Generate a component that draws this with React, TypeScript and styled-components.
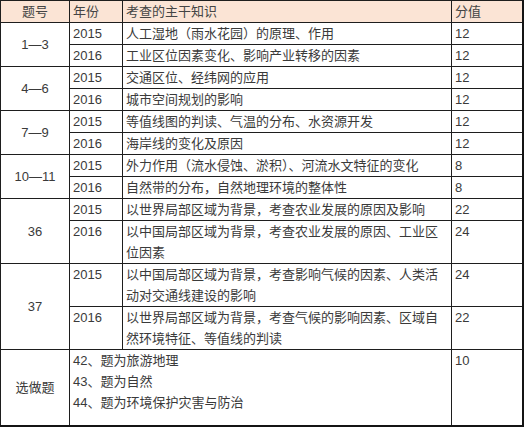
import styled, { createGlobalStyle } from "styled-components";

const GlobalStyle = createGlobalStyle`
  body {
    margin: 0;
    background: #ffffff;
  }
`;

const Table = styled.table`
  border-collapse: collapse;
  width: 522px;
  table-layout: fixed;
  font-family: "Liberation Sans", "Noto Sans CJK SC", sans-serif;
  font-size: 13px;
  color: #3a3a3a;
  border-right: 2px solid #141414;
  border-bottom: 2px solid #141414;
`;

const Cell = styled.td<{ $center?: boolean; $top?: boolean }>`
  border: 1px solid #1e1e1e;
  padding: 0 3px;
  line-height: 21px;
  white-space: normal;
  text-align: ${(p) => (p.$center ? "center" : "left")};
  vertical-align: ${(p) => (p.$top ? "top" : "middle")};
`;

const HeadCell = styled.th<{ $center?: boolean }>`
  border: 1px solid #1e1e1e;
  background: #fbe4d5;
  padding: 0 3px;
  line-height: 21px;
  font-weight: normal;
  color: #444;
  text-align: ${(p) => (p.$center ? "center" : "left")};
`;

const Optional = styled.div`
  padding-bottom: 12px;
`;

type Item = { year: string; topic: string; score: string };
type Group = { no: string; items: Item[] };

const groups: Group[] = [
  {
    no: "1—3",
    items: [
      { year: "2015", topic: "人工湿地（雨水花园）的原理、作用", score: "12" },
      { year: "2016", topic: "工业区位因素变化、影响产业转移的因素", score: "12" },
    ],
  },
  {
    no: "4—6",
    items: [
      { year: "2015", topic: "交通区位、经纬网的应用", score: "12" },
      { year: "2016", topic: "城市空间规划的影响", score: "12" },
    ],
  },
  {
    no: "7—9",
    items: [
      { year: "2015", topic: "等值线图的判读、气温的分布、水资源开发", score: "12" },
      { year: "2016", topic: "海岸线的变化及原因", score: "12" },
    ],
  },
  {
    no: "10—11",
    items: [
      { year: "2015", topic: "外力作用（流水侵蚀、淤积）、河流水文特征的变化", score: "8" },
      { year: "2016", topic: "自然带的分布，自然地理环境的整体性", score: "8" },
    ],
  },
  {
    no: "36",
    items: [
      { year: "2015", topic: "以世界局部区域为背景，考查农业发展的原因及影响", score: "22" },
      { year: "2016", topic: "以中国局部区域为背景，考查农业发展的原因、工业区位因素", score: "24" },
    ],
  },
  {
    no: "37",
    items: [
      { year: "2015", topic: "以中国局部区域为背景，考查影响气候的因素、人类活动对交通线建设的影响", score: "24" },
      { year: "2016", topic: "以世界局部区域为背景，考查气候的影响因素、区域自然环境特征、等值线的判读", score: "22" },
    ],
  },
];

export default function App() {
  return (
    <>
      <GlobalStyle />
      <Table>
        <colgroup>
          <col style={{ width: 69 }} />
          <col style={{ width: 53 }} />
          <col style={{ width: 329 }} />
          <col style={{ width: 71 }} />
        </colgroup>
        <thead>
          <tr>
            <HeadCell $center>题号</HeadCell>
            <HeadCell>年份</HeadCell>
            <HeadCell>考查的主干知识</HeadCell>
            <HeadCell>分值</HeadCell>
          </tr>
        </thead>
        <tbody>
          {groups.map((g) =>
            g.items.map((it, i) => (
              <tr key={g.no + it.year}>
                {i === 0 && (
                  <Cell $center rowSpan={g.items.length}>
                    {g.no}
                  </Cell>
                )}
                <Cell $top>{it.year}</Cell>
                <Cell $top>{it.topic}</Cell>
                <Cell $top>{it.score}</Cell>
              </tr>
            ))
          )}
          <tr>
            <Cell $center>选做题</Cell>
            <Cell $top colSpan={2}>
              <Optional>
                42、题为旅游地理
                <br />
                43、题为自然
                <br />
                44、题为环境保护灾害与防治
              </Optional>
            </Cell>
            <Cell $top>10</Cell>
          </tr>
        </tbody>
      </Table>
    </>
  );
}
